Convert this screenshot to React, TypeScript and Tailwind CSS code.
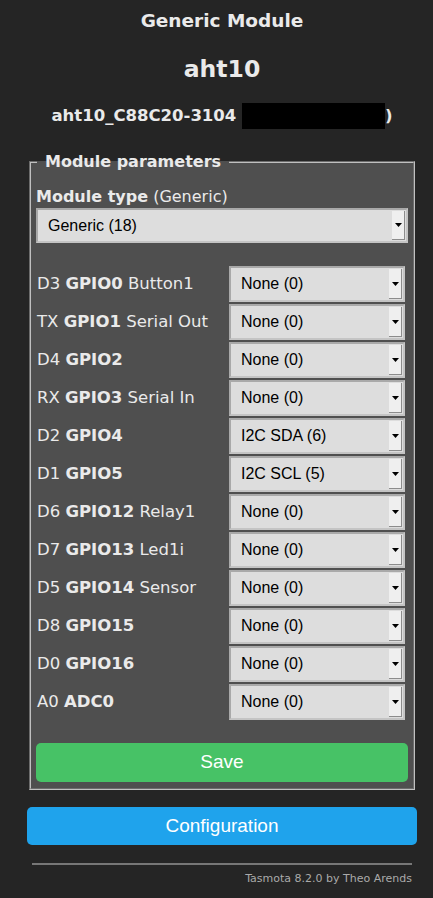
import React from "react";

const rows: [string, string, string, string][] = [
  ["D3", "GPIO0", "Button1", "None (0)"],
  ["TX", "GPIO1", "Serial Out", "None (0)"],
  ["D4", "GPIO2", "", "None (0)"],
  ["RX", "GPIO3", "Serial In", "None (0)"],
  ["D2", "GPIO4", "", "I2C SDA (6)"],
  ["D1", "GPIO5", "", "I2C SCL (5)"],
  ["D6", "GPIO12", "Relay1", "None (0)"],
  ["D7", "GPIO13", "Led1i", "None (0)"],
  ["D5", "GPIO14", "Sensor", "None (0)"],
  ["D8", "GPIO15", "", "None (0)"],
  ["D0", "GPIO16", "", "None (0)"],
  ["A0", "ADC0", "", "None (0)"],
];

function Select({ value, className }: { value: string; className?: string }) {
  return (
    <div
      className={`flex items-center bg-[#dddddd] border-2 border-t-[#a9a9a9] border-l-[#a9a9a9] border-r-[#c4c4c4] border-b-[#c4c4c4] pl-[10px] pr-[1px] text-black text-[16px] font-['Liberation_Sans',Arial,sans-serif] ${className ?? ""}`}
    >
      <span className="flex-1">{value}</span>
      <div className="flex h-[calc(100%-2px)] w-[13px] items-center justify-center bg-[#efefef] border-r border-b border-[#8c8c8c]">
        <svg width="7" height="4" viewBox="0 0 7 4">
          <path d="M0 0h7L3.5 4z" fill="#000" />
        </svg>
      </div>
    </div>
  );
}

export default function App() {
  return (
    <div className="min-h-[898px] bg-[#252525] font-['DejaVu_Sans',Verdana,sans-serif] text-[#eaeaea]">
      <div className="ml-[27px] w-[390px]">
        <div className="h-[42px] text-center text-[18.5px] font-bold leading-[42px]">Generic Module</div>
        <div className="mt-[6px] h-[42px] text-center text-[23.5px] font-bold leading-[42px]">aht10</div>
        <div className="mt-[10px] flex h-[32px] items-center justify-center text-[16.5px] font-bold">
          <span>aht10_C88C20-3104&nbsp;</span>
          <span className="inline-block h-[26px] w-[143px] bg-black" />
          <span>)</span>
        </div>

        <fieldset className="mx-[2px] mt-[20px] border-2 border-[#c0c0c0] [border-style:groove] bg-[#4f4f4f] px-[5px] pb-[6px]">
          <legend className="ml-[1px] px-[8px] text-[16px] font-bold leading-[20px]">Module parameters</legend>
          <div className="mt-[15px] text-[16px] leading-[20px]">
            <b>Module type</b> (Generic)
          </div>
          <Select value="Generic (18)" className="mt-[1px] h-[35px]" />

          <div className="mt-[23px] flex flex-col gap-[2px]">
            {rows.map(([pin, gpio, fn, val]) => (
              <div key={gpio} className="flex h-[36px] items-center">
                <div className="w-[193px] pl-[1px] text-[16.5px]">
                  {pin} <b>{gpio}</b>
                  {fn ? ` ${fn}` : ""}
                </div>
                <Select value={val} className="h-[36px] w-[176px]" />
              </div>
            ))}
          </div>

          <button className="mt-[23px] h-[39px] w-full rounded-[5px] bg-[#47c266] text-[19px] text-white font-['Liberation_Sans',Arial,sans-serif]">
            Save
          </button>
        </fieldset>

        <button className="mt-[17px] h-[38px] w-full rounded-[5px] bg-[#1fa3ec] text-[19px] text-white font-['Liberation_Sans',Arial,sans-serif]">
          Configuration
        </button>

        <div className="mx-[5px] mt-[18px] h-[2px] bg-[#777777]" />
        <div className="mr-[5px] mt-[6px] text-right text-[11px] text-[#aaaaaa]">Tasmota 8.2.0 by Theo Arends</div>
      </div>
    </div>
  );
}
